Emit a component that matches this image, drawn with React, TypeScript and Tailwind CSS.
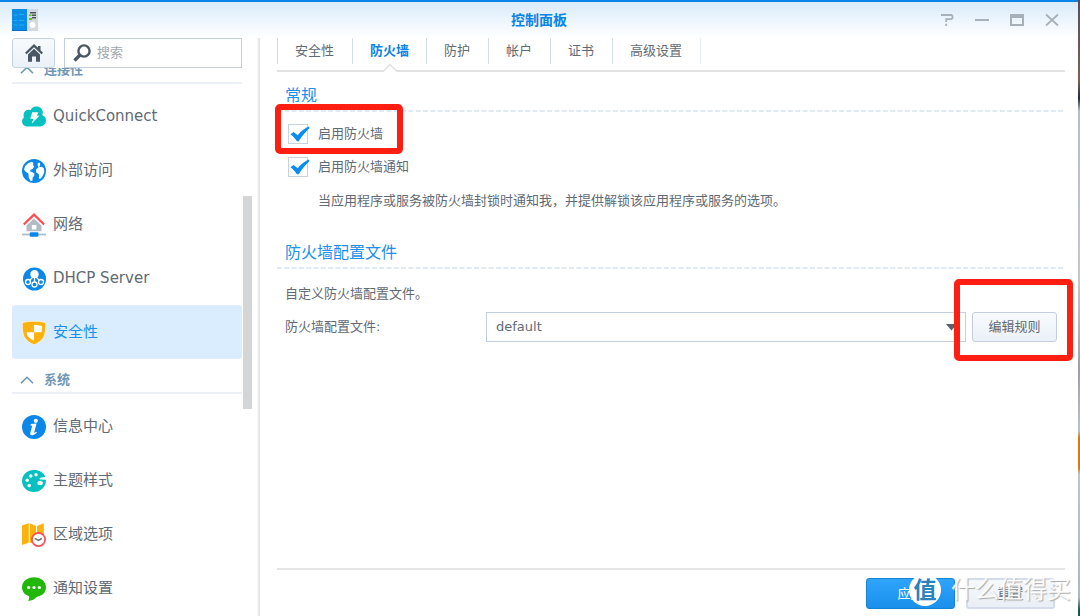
import React from 'react';

type IconProps = { children: React.ReactNode };

function Svg({ children }: IconProps) {
  return (
    <svg viewBox="0 0 24 24" className="size-6 shrink-0" aria-hidden="true">
      {children}
    </svg>
  );
}

const QuickConnectIcon = () => (
  <Svg>
    <path fill="#06c1bf" d="M5 21.5a5 5 0 0 1-5-5 5.2 5.2 0 0 1 2-4.2A5.5 5.5 0 0 1 1.600 9.500 4.900 4.900 0 0 1 6.500 4.800c.8 0 1.500.1 2.100.4A6 6 0 0 1 14.500 1.500c3.500 0 6.300 2.500 6.300 5.800 0 1-.2 1.900-.6 2.700A6 6 0 0 1 24 15.500a6 6 0 0 1-5.500 6Z" />
    <path fill="#fff" d="M10.200 7.200h6.200l-1.400 3.600h2.400L9.600 18.800l1.800-5H8.200Z" />
  </Svg>
);

const GlobeIcon = () => (
  <Svg>
    <circle cx="12" cy="12" r="12" fill="#0a87e8" />
    <path fill="#fff" d="M3 7.300 6 4.200l3.800-1.400 1.500 1-.3 2.400 1.200 1-1.600 2.800-1.800.8-1 1.400 2.400.7 2.200 1.700-.2 2.200-1.500 1.800-.3 3.200-1.700.4-2-3.600-.3-4-2.500-1.600-1.900-2.400ZM15.800 4.600l1.400-1 1 1.400-.4 2.500-1.400.6-.8-1.500ZM14.200 10.300l2.300-2 3.400-.6 1.900 1.600.6 3-1 3.300-1.600 2.700-1.900 2-1-1.400.2-3.200-1.300-1.300-1.700-1.200Z" />
  </Svg>
);

const NetworkIcon = () => (
  <Svg>
    <path fill="#b2bcc6" d="M12 5.500 4.500 12.500V18.300h15v-5.800Z" />
    <rect x="9.800" y="12" width="4.600" height="4.600" rx=".6" fill="#fff" />
    <path fill="none" stroke="#fb4c52" strokeWidth="2.200" d="M1.800 11.500 12 1.600l10.200 9.900" />
    <path stroke="#b2bcc6" strokeWidth="1.800" d="M0 21.500h24" />
    <rect x="7.800" y="19.200" width="8.600" height="4.600" rx="1" fill="#0a87e8" />
  </Svg>
);

const DhcpIcon = () => (
  <Svg>
    <circle cx="12.500" cy="12" r="11.500" fill="#0a87e8" />
    <path fill="#fff" d="M12.500 3a4.200 4.200 0 0 1 4.200 4.200c0 1.600-.8 2.700-1.700 3.800h-5C9.100 9.900 8.300 8.800 8.300 7.200A4.200 4.200 0 0 1 12.500 3Z" />
    <g fill="none" stroke="#fff" strokeWidth="1.300">
      <path d="M10.500 10.500 8 13M12.500 11v4M14.500 10.500 17 13" />
      <circle cx="6" cy="15" r="2.500" />
      <circle cx="12.500" cy="17.500" r="2.500" />
      <circle cx="19" cy="15" r="2.500" />
    </g>
  </Svg>
);

const ShieldIcon = () => (
  <Svg>
    <path fill="#fdb10a" stroke="#fff" strokeWidth=".6" d="M12 .3c3.500 0 8.200.4 11.700 1.500 0 6.800-.3 11.200-2.300 14.800-1.900 3.400-5.900 5.800-9.400 7.100-3.500-1.300-7.500-3.700-9.400-7.100C.6 13 .3 8.600.3 1.800 3.800.7 8.500.3 12 .3Z" />
    <path fill="#fff" d="M12 4c2.600 0 5.500.2 8 .9 0 2.400-.1 4.600-.5 6.300H12ZM12 11.200v8.600c-2.500-1.200-5-2.900-6.400-5.100-.6-1-.9-2.200-1.100-3.500Z" />
  </Svg>
);

const InfoIcon = () => (
  <Svg>
    <circle cx="12" cy="12" r="12" fill="#0a87e8" />
    <circle cx="13.800" cy="5.800" r="2.100" fill="#fff" />
    <path fill="#fff" d="m8.400 10.400.3-1.300 5.900-.6-2.300 8.600c-.2.900.3 1.100 1.900-.3l.7.800c-2 2.200-3.700 3-5.200 2.700-1.700-.3-1.600-1.600-1.300-2.800l1.600-6c.2-.9-.3-1.100-1.600-1.100Z" />
  </Svg>
);

const PaletteIcon = () => (
  <Svg>
    <path fill="#06c1bf" d="M12 1c5.500 0 10 2.700 11.300 7-2.300.5-5.300.3-5.800 1.500-.5 1.400 2.500.9 6.400 1.500C24.200 18 18.500 23 12 23S0 18.500 0 12 5.500 1 12 1Z" />
    <g fill="#fff">
      <ellipse cx="18.100" cy="14" rx="2.800" ry="2" />
      <circle cx="14" cy="5.800" r="1.700" />
      <circle cx="8.800" cy="7" r="1.700" />
      <circle cx="5.200" cy="11.200" r="1.700" />
      <circle cx="7.200" cy="16.600" r="1.800" />
    </g>
  </Svg>
);

const RegionIcon = () => (
  <Svg>
    <path fill="#fdb10a" d="M0 2.500 6.800.2v19.600L0 22ZM7.800.2l6.200 2.700V20l-6.200-.2ZM15 2.900 21.800.2V12L15 14Z" />
    <circle cx="16.500" cy="16.500" r="6.600" fill="#fff" stroke="#fb4c52" strokeWidth="1.700" />
    <path fill="none" stroke="#67727c" strokeWidth="1.500" d="m12.800 15.400 3.600 2 3.500-1.900" />
  </Svg>
);

const NotificationIcon = () => (
  <Svg>
    <path fill="#21b80a" d="M12 .2c6.800 0 12 4.200 12 10 0 5-3.500 8.600-9 9.500-2 2.300-5 4-9 4.300 1-1.300 1.300-2.700 1-4.800C2.700 17.700 0 14.600 0 10.200c0-5.800 5.200-10 12-10Z" />
    <g fill="#fff">
      <circle cx="6.600" cy="10.500" r="1.600" />
      <circle cx="12" cy="10.500" r="1.600" />
      <circle cx="17.400" cy="10.500" r="1.600" />
    </g>
  </Svg>
);

type Item = { label: string; icon: () => React.ReactElement; active?: boolean };

const groups: { title: string; items: Item[] }[] = [
  {
    title: '连接性',
    items: [
      { label: 'QuickConnect', icon: QuickConnectIcon },
      { label: '外部访问', icon: GlobeIcon },
      { label: '网络', icon: NetworkIcon },
      { label: 'DHCP Server', icon: DhcpIcon },
      { label: '安全性', icon: ShieldIcon, active: true },
    ],
  },
  {
    title: '系统',
    items: [
      { label: '信息中心', icon: InfoIcon },
      { label: '主题样式', icon: PaletteIcon },
      { label: '区域选项', icon: RegionIcon },
      { label: '通知设置', icon: NotificationIcon },
    ],
  },
];

const tabs = ['安全性', '防火墙', '防护', '帐户', '证书', '高级设置'];

function TitleBar() {
  return (
    <header className="relative flex h-[38px] shrink-0 items-center justify-between border-t-2 border-[#0a84e6] bg-linear-to-b from-[#d9ebfa] to-white pr-[19px] pl-3">
      <svg viewBox="0 0 26 22" className="h-[22px] w-[26px]" aria-hidden="true">
        <path fill="#d3d9dd" d="M14 0h12v22H14z" />
        <path fill="#0b8de6" d="M0 0h15v22H0z" />
        <path fill="#0a6fc0" d="M0 21h15v1H0z" />
        <path stroke="#1fb0f2" strokeWidth="1" d="M1.500 6h4M7 5.500h5M1.500 11.500h4M7 11.500h5M1.500 16h4M7 16h5" />
        <path fill="#4a5560" d="M18 3h6v1.500h-6zM20 5.500h4V7h-4zM20 8h4v1.500h-4z" />
        <path fill="#5bc80a" d="M17 5.500h2.500V7H17zM17 9h3v2h-3z" />
        <circle cx="20.500" cy="16" r="3" fill="#fff" />
      </svg>
      <h1 className="absolute inset-x-0 text-center text-sm font-bold text-[#0a84e6]">控制面板</h1>
      <div className="relative flex gap-[21px] text-[#a7b0b8]">
        <button type="button" aria-label="帮助" className="size-3.5">
          <svg viewBox="0 0 14 14" fill="none" stroke="currentColor" strokeWidth="1.800">
            <path d="M1 2h10.500l1 1v2l-1 1.200H6.200V9M6.200 10.800v2.200" />
          </svg>
        </button>
        <button type="button" aria-label="最小化" className="size-3.5">
          <svg viewBox="0 0 14 14" stroke="currentColor" strokeWidth="2">
            <path d="M0 7h14" />
          </svg>
        </button>
        <button type="button" aria-label="最大化" className="size-3.5">
          <svg viewBox="0 0 14 14" fill="none" stroke="currentColor" strokeWidth="2">
            <path d="M1 2h12v10H1zM1 4h12" />
          </svg>
        </button>
        <button type="button" aria-label="关闭" className="size-3.5">
          <svg viewBox="0 0 14 14" stroke="currentColor" strokeWidth="1.800">
            <path d="m1 1.500 12 11M13 1.500 1 12.500" />
          </svg>
        </button>
      </div>
    </header>
  );
}

function Sidebar() {
  return (
    <aside className="flex w-[257px] shrink-0 flex-col pl-3">
      <div className="flex h-[30px] shrink-0 gap-[9px] pr-[15px]">
        <button type="button" aria-label="主页" className="flex w-[43px] items-center justify-center rounded-[3px] border border-[#c6d3e0] bg-linear-to-b from-[#f8fbfd] to-[#eaf1f8]">
          <svg viewBox="0 0 18 18" className="size-[18px]" fill="#4b5763" aria-hidden="true">
            <path d="M9 0 0 8.700 1.600 10.300 9 3.200l7.400 7.100L18 8.700l-2.500-2.500V2h-2.500v1.800Z" />
            <path d="M9 4.700 3 10.400v7.400h4V12.500h4v5.300h4v-7.400Z" />
          </svg>
        </button>
        <label className="flex min-w-0 flex-1 items-center gap-1.5 border border-[#c3cfdc] bg-white px-2">
          <svg viewBox="0 0 18 18" className="size-[18px] shrink-0" fill="none" stroke="#4b5763" aria-hidden="true">
            <circle cx="11" cy="7" r="5.600" strokeWidth="2.400" />
            <path strokeWidth="3.400" d="m7 11-5.500 5.500" />
          </svg>
          <input type="text" aria-label="搜索" placeholder="搜索" className="min-w-0 flex-1 text-[13px] outline-none placeholder:text-[#a0a8b0]" />
        </label>
      </div>
      <div className="flex min-h-0 flex-1 overflow-hidden">
        <nav className="-mt-[19px] w-[230px] shrink-0">
          {groups.map((group) => (
            <section key={group.title}>
              <h2 className="mb-[5px] flex h-[35px] items-center gap-2.5 border-b-2 border-[#eaf0f6] pt-2 pl-2 text-[13px] font-bold text-[#6f97b5]">
                <svg viewBox="0 0 14 8" className="h-2 w-3.5" fill="none" stroke="currentColor" strokeWidth="1.600" aria-hidden="true">
                  <path d="m1 7.300 6-6 6 6" />
                </svg>
                {group.title}
              </h2>
              <ul>
                {group.items.map(({ label, icon: Icon, active }) => (
                  <li key={label}>
                    <a
                      href="#"
                      className={
                        active
                          ? 'flex h-[54px] items-center gap-[7px] rounded-[3px] bg-[#d9edff] pt-px pl-2.5 text-[15px] text-[#1a8fee]'
                          : 'flex h-[54px] items-center gap-[7px] pt-px pl-2.5 text-[15px] text-[#5f6a74]'
                      }
                    >
                      <Icon />
                      {label}
                    </a>
                  </li>
                ))}
              </ul>
            </section>
          ))}
        </nav>
        <div className="mt-32 ml-px h-[213px] w-[9px] bg-[#d3d5d7]" />
      </div>
    </aside>
  );
}

function Check({ id, label }: { id: string; label: string }) {
  return (
    <div className="flex items-center gap-2.5">
      <span className="grid size-5">
        <input id={id} type="checkbox" defaultChecked className="peer col-start-1 row-start-1 size-5 appearance-none border border-[#c9d3de] bg-white" />
        <svg viewBox="0 0 20 20" className="pointer-events-none invisible col-start-1 row-start-1 size-5 overflow-visible peer-checked:visible" fill="#0a8cf0" aria-hidden="true">
          <path d="m2.500 10.300 3-2.300 4.200 3.200C12.500 7.800 16.500 4.500 20.500 2.600l1.100 1.300C17.500 7.800 13.800 12 10.800 17.300H8.900C7.200 14.500 5 12.300 2.500 10.300Z" />
        </svg>
      </span>
      <label htmlFor={id}>{label}</label>
    </div>
  );
}

function SectionTitle({ children }: { children: string }) {
  return (
    <h2 className="flex h-[29px] items-center pl-2 text-base text-[#1a90ec]">{children}</h2>
  );
}

function DashedRule() {
  return (
    <svg className="h-0.5 w-full shrink-0" aria-hidden="true">
      <line x1="0" y1="1" x2="100%" y2="1" stroke="#d6e3ef" strokeWidth="1.500" strokeDasharray="5 2.300" />
    </svg>
  );
}

function Firewall() {
  return (
    <main className="flex min-w-0 flex-1 flex-col pr-[13px] pl-[17px]">
      <nav className="h-[34px] shrink-0 border-b-2 border-[#e2e2e2]">
        <ul className="flex h-[26px] border-l border-[#d3deea]">
          {tabs.map((tab) => (
            <li key={tab} className="relative flex border-r border-[#d3deea] last:border-[#e6edf4]">
              <button type="button" className={tab === '防火墙' ? 'px-[17px] font-bold text-[#0a84e6]' : 'pr-[18px] pl-[17px]'}>
                {tab}
              </button>
              {tab === '防火墙' && (
                <svg viewBox="0 0 16 10" className="absolute top-[25px] left-1/2 h-2.5 w-4 -translate-x-1/2" aria-hidden="true">
                  <path fill="#fff" d="M1 8.500 8 1.500l7 7V10H1Z" />
                  <path fill="none" stroke="#e2e2e2" strokeWidth="1.600" d="M1 8.500 8 1.500l7 7" />
                </svg>
              )}
            </li>
          ))}
        </ul>
      </nav>

      <div className="flex-1">
        <section className="pt-[9px]">
          <SectionTitle>常规</SectionTitle>
          <DashedRule />
          <div className="flex flex-col items-start gap-[13px] pt-3 pl-[11px]">
            <div className="relative">
              <Check id="enable" label="启用防火墙" />
              <span className="pointer-events-none absolute -top-[20px] -right-5 -bottom-2.5 -left-[13px] rounded-[5px] border-6 border-[#ff1f12]" />
            </div>
            <Check id="notify" label="启用防火墙通知" />
            <p className="pl-[30px] leading-[22px]">当应用程序或服务被防火墙封锁时通知我，并提供解锁该应用程序或服务的选项。</p>
          </div>
        </section>

        <section className="pt-[26px]">
          <SectionTitle>防火墙配置文件</SectionTitle>
          <DashedRule />
          <div className="pt-[15px] pr-2 pl-2">
            <p className="leading-5">自定义防火墙配置文件。</p>
            <div className="mt-2 flex h-[30px] items-center">
              <label htmlFor="profile" className="w-[201px] shrink-0">防火墙配置文件:</label>
              <div className="grid h-[30px] min-w-0 flex-1 items-center">
                <select id="profile" className="col-start-1 row-start-1 h-[30px] appearance-none border border-[#c3cfdc] bg-white px-[9px]">
                  <option>default</option>
                </select>
                <svg viewBox="0 0 11 7" className="pointer-events-none col-start-1 row-start-1 mr-[9px] h-[7px] w-[11px] justify-self-end" aria-hidden="true">
                  <path fill="#56616b" d="M0 0h11L5.500 6.500Z" />
                </svg>
              </div>
              <div className="relative ml-1.5 h-[30px]">
                <button type="button" className="h-[30px] w-[85px] rounded-[3px] border border-[#c3cfdc] bg-linear-to-b from-[#f8fbfd] to-[#eaf1f8]">编辑规则</button>
                <span className="pointer-events-none absolute -top-[33px] -right-4 -bottom-[19px] -left-[18px] rounded-[5px] border-6 border-[#ff1f12]" />
              </div>
            </div>
          </div>
        </section>
      </div>

      <footer className="flex shrink-0 justify-end gap-[11px] border-t-2 border-[#e5e5e5] pt-2 pr-2.5 pb-[7px]">
        <button type="button" className="h-[31px] w-[89px] rounded-[3px] border border-[#1584d4] bg-linear-to-b from-[#2fa4fb] to-[#1a90ec] text-white">应用</button>
        <button type="button" className="h-[31px] w-[89px] rounded-[3px] border-2 border-[#d3dce8] bg-linear-to-b from-[#f6f9fc] to-[#e9eff5]">重置</button>
      </footer>
    </main>
  );
}

function Watermark() {
  return (
    <div className="pointer-events-none absolute right-[9px] bottom-2.5 flex items-center gap-2.5">
      <span className="flex size-8 items-center justify-center rounded-full bg-white text-[23px] leading-none font-bold text-[#2a83bd]">值</span>
      <span className="text-2xl leading-8 text-white/90 [text-shadow:1px_1px_1px_#aaa]">什么值得买</span>
    </div>
  );
}

export default function App() {
  return (
    <div className="relative flex h-screen overflow-hidden bg-white font-['DejaVu_Sans','Noto_Sans_CJK_SC',sans-serif] text-[13px] text-[#5f6a74]">
      <div className="flex min-w-0 flex-1 flex-col">
        <TitleBar />
        <div className="flex min-h-0 flex-1">
          <Sidebar />
          <div className="w-[3px] shrink-0 bg-linear-to-r from-[#fafafa] to-[#dedede]" />
          <Firewall />
        </div>
      </div>
      <div className="w-0.5 shrink-0 bg-[linear-gradient(#5b4a62_0%,#8a5a50_13%,#1d3048_16%,#b4bec6_18%,#c4c8cb_45%,#9aa0a5_60%,#b9c2c8_70%,#d9790f_71%,#d9790f_76%,#b9c6cc_77%,#a9b9bf_97%,#0e5a5c_99%)]" />
      <Watermark />
    </div>
  );
}
